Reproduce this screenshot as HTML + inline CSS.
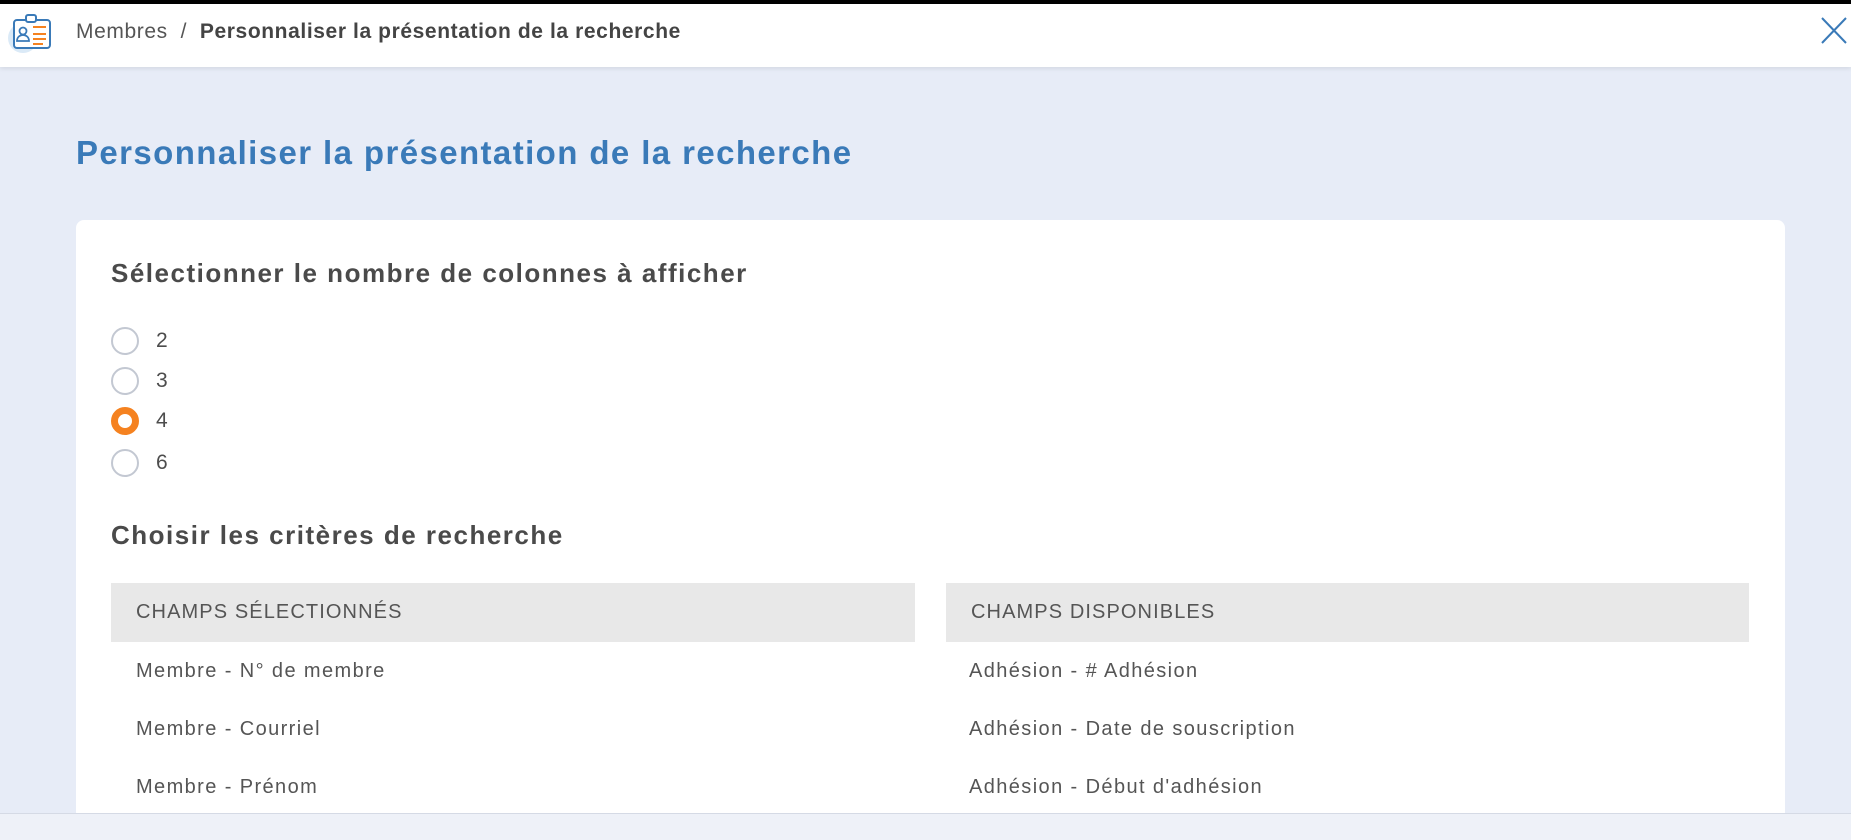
<!DOCTYPE html>
<html><head><meta charset="utf-8"><style>
*{margin:0;padding:0;box-sizing:border-box}
body{width:1851px;height:840px;overflow:hidden;background:#e7ecf7;font-family:"Liberation Sans",sans-serif;color:#4d4d4d;position:relative}
.top{position:absolute;left:0;top:0;width:1851px;height:4px;background:#000}
.hdr{position:absolute;left:0;top:4px;width:1851px;height:63px;background:#fff;box-shadow:0 2px 4px rgba(0,0,0,.08)}
.crumb{position:absolute;left:76px;top:16px;font-size:21px;color:#555;letter-spacing:.6px}
.crumb b{color:#444}
.title{position:absolute;left:76px;top:134px;font-size:33px;color:#3a7ab8;font-weight:bold;letter-spacing:1.4px}
.card{position:absolute;left:76px;top:220px;width:1709px;height:600px;background:#fff;border-radius:8px}
h2{position:absolute;font-size:26px;color:#4a4a4a;font-weight:bold;letter-spacing:1.5px}
.r{position:absolute;left:111px;width:28px;height:28px;border:2px solid #c3c8d2;border-radius:50%}
.r.on{border:7px solid #f58220;background:#fff}
.l{position:absolute;left:156px;font-size:21px;color:#4d4d4d}
.th{position:absolute;top:583px;height:59px;background:#e8e8e8;font-size:20px;line-height:59px;padding-left:25px;color:#555;letter-spacing:1.1px}
.td{position:absolute;font-size:20px;color:#555;letter-spacing:1.4px}
.foot{position:absolute;left:0;top:813px;width:1851px;height:27px;background:#eef1f8;border-top:1px solid #d5dae5}
</style></head><body>
<div class="top"></div>
<div class="hdr">
<svg style="position:absolute;left:6px;top:4px" width="50" height="48" viewBox="0 0 50 48">
<circle cx="17" cy="30" r="15" fill="#dbeaf7"/>
<rect x="8" y="12" width="36" height="28" rx="3" fill="#fff" stroke="#3a7ab8" stroke-width="2"/>
<rect x="20" y="7" width="10" height="7" rx="2" fill="#fff" stroke="#3a7ab8" stroke-width="2"/>
<circle cx="17" cy="23" r="3.5" fill="none" stroke="#3a7ab8" stroke-width="1.8"/>
<path d="M11 33c0-4 3-6 6-6s6 2 6 6z" fill="none" stroke="#3a7ab8" stroke-width="1.8"/>
<path d="M27 19h13M27 26h13M27 31h13M27 36h10" stroke="#f58220" stroke-width="2"/>
</svg>
<div class="crumb">Membres &nbsp;/&nbsp; <b>Personnaliser la présentation de la recherche</b></div>
<svg style="position:absolute;left:1821px;top:13px" width="26" height="27" viewBox="0 0 26 27"><path d="M1 1L25 26M25 1L1 26" stroke="#3a7ab8" stroke-width="2"/></svg>
</div>
<div class="title">Personnaliser la présentation de la recherche</div>
<div class="card"></div>
<h2 style="left:111px;top:258px">Sélectionner le nombre de colonnes à afficher</h2>
<div class="r" style="top:327px"></div><div class="l" style="top:329px">2</div>
<div class="r" style="top:367px"></div><div class="l" style="top:369px">3</div>
<div class="r on" style="top:407px"></div><div class="l" style="top:409px">4</div>
<div class="r" style="top:449px"></div><div class="l" style="top:451px">6</div>
<h2 style="left:111px;top:520px">Choisir les critères de recherche</h2>
<div class="th" style="left:111px;width:804px">CHAMPS SÉLECTIONNÉS</div>
<div class="th" style="left:946px;width:803px">CHAMPS DISPONIBLES</div>
<div class="td" style="left:136px;top:660px">Membre - N° de membre</div>
<div class="td" style="left:136px;top:718px">Membre - Courriel</div>
<div class="td" style="left:136px;top:776px">Membre - Prénom</div>
<div class="td" style="left:969px;top:660px">Adhésion - # Adhésion</div>
<div class="td" style="left:969px;top:718px">Adhésion - Date de souscription</div>
<div class="td" style="left:969px;top:776px">Adhésion - Début d'adhésion</div>
<div class="foot"></div>
</body></html>
